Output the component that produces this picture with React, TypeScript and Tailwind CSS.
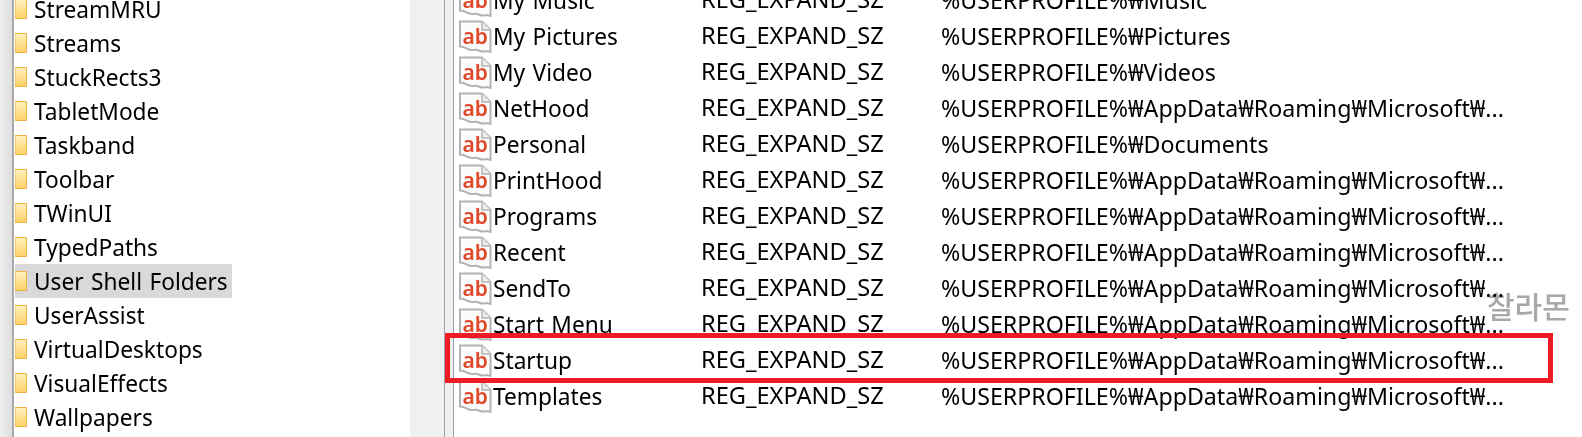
const leftRows = ["StreamMRU", "Streams", "StuckRects3", "TabletMode", "Taskband", "Toolbar", "TWinUI", "TypedPaths", "User Shell Folders", "UserAssist", "VirtualDesktops", "VisualEffects", "Wallpapers"];

const appData = "%USERPROFILE%₩AppData₩Roaming₩Microsoft₩...";

const rightRows = [
  { name: "My Music", value: "%USERPROFILE%₩Music" },
  { name: "My Pictures", value: "%USERPROFILE%₩Pictures" },
  { name: "My Video", value: "%USERPROFILE%₩Videos" },
  { name: "NetHood", value: appData },
  { name: "Personal", value: "%USERPROFILE%₩Documents" },
  { name: "PrintHood", value: appData },
  { name: "Programs", value: appData },
  { name: "Recent", value: appData },
  { name: "SendTo", value: appData },
  { name: "Start Menu", value: appData },
  { name: "Startup", value: appData },
  { name: "Templates", value: appData },
];

function FolderIcon() {
  return (
    <svg width="12" height="20" viewBox="0 0 12 20" className="shrink-0">
      <defs>
        <linearGradient id="folder" x1="0" y1="0" x2="0" y2="1">
          <stop offset="0" stopColor="#fff0c0" />
          <stop offset="1" stopColor="#fdd166" />
        </linearGradient>
      </defs>
      <path d="M0 0.5H11.5V19.5H0Z" fill="url(#folder)" stroke="#e9b440" />
    </svg>
  );
}

function RegIcon() {
  return (
    <svg width="33" height="33" viewBox="0 0 33 33" className="shrink-0">
      <path
        d="M1 1.5H23L31.5 10V32C28 29.5 25 33 21 31C16 28.5 14 31 10 29.5C7 28 4 26.5 1 26.5Z"
        fill="#fbfbfb"
        stroke="#b4b4b4"
        strokeWidth="2"
      />
      <path d="M23 1.5V10H31.5" fill="#ececec" stroke="#b4b4b4" strokeWidth="1.5" />
      <text x="3.5" y="23.5" fontSize="21" fontWeight="600" fill="#e0492a" fontFamily="'Noto Sans', sans-serif">
        ab
      </text>
    </svg>
  );
}

export default function App() {
  return (
    <div className="flex h-[437px] w-[1582px] overflow-hidden bg-white text-[22.7px] text-black [word-spacing:1.5px] [font-family:'Noto_Sans','Noto_Sans_CJK_KR',sans-serif]">
      {/* Tree */}
      <div className="w-[14px] shrink-0 border-r-[2px] border-[#a9a9a9] bg-gradient-to-r from-[#f0f0f0] to-[#dedede]" />
      <div className="-mt-[8px] w-[396px] shrink-0 pl-[1px]">
        {leftRows.map((name) => (
          <div key={name} className="flex h-[34px] items-center">
            <div
              className={`flex h-[34px] items-center gap-[7px] pr-[4px] whitespace-nowrap ${
                name === "User Shell Folders" ? "bg-[#d9d9d9]" : ""
              }`}
            >
              <FolderIcon />
              <span className="pt-[2px]">{name}</span>
            </div>
          </div>
        ))}
      </div>

      {/* Splitter */}
      <div className="w-[35px] shrink-0 border-r-[1.5px] border-[#a0a0a8] bg-[#f0f0f0]" />
      <div className="w-[9px] shrink-0 border-r-[1.5px] border-[#a0a0a8] bg-[#f0f0f0]" />

      {/* Values */}
      <div className="-mt-[18px] flex-1 pl-[5px]">
        {rightRows.map((row) => (
          <div key={row.name} className="flex h-[36px] items-center whitespace-nowrap">
            <RegIcon />
            <span className="ml-[1px] w-[208px] pt-[2px]">{row.name}</span>
            <span className="w-[240px] text-[23.6px]">REG_EXPAND_SZ</span>
            <span className="text-[23.2px]">{row.value}</span>
          </div>
        ))}
      </div>

      {/* Highlight box and watermark */}
      <div className="absolute left-[445px] top-[333px] h-[50px] w-[1108px] border-[5px] border-[#ed1c24]" />
      <div className="absolute left-[1487px] top-[283px] text-[30px] font-medium text-[#a8a8a8] mix-blend-multiply [font-family:'Noto_Sans_CJK_KR',sans-serif]">
        찰라몬
      </div>
    </div>
  );
}
